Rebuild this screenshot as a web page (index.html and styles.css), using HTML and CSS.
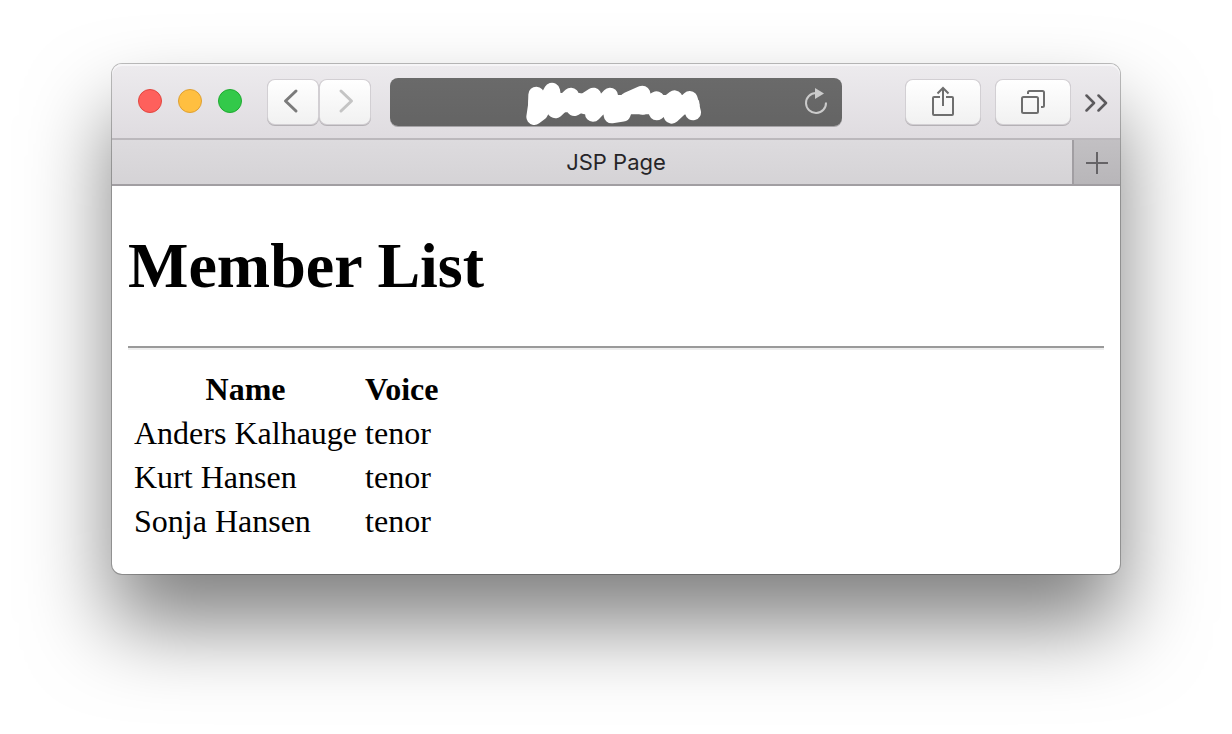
FILE: index.html
```html
<!DOCTYPE html>
<html lang="en">
<head>
<meta charset="utf-8">
<title>JSP Page</title>
<link rel="stylesheet" href="styles.css">
</head>
<body class="desktop">
<div class="window">
  <header class="toolbar">
    <div class="lights">
      <button class="light light-close" aria-label="Close"></button>
      <button class="light light-minimize" aria-label="Minimize"></button>
      <button class="light light-zoom" aria-label="Zoom"></button>
    </div>
    <nav class="history">
      <button class="tool tool-nav" aria-label="Back">
        <svg width="20" height="28" viewBox="0 0 20 28"><path d="M14 3 3.500 13 14 23" fill="none" stroke="#7b7b7b" stroke-width="3" stroke-linecap="round" stroke-linejoin="round"/></svg>
      </button>
      <button class="tool tool-nav" aria-label="Forward">
        <svg width="20" height="28" viewBox="0 0 20 28"><path d="M7 3l10.500 10L7 23" fill="none" stroke="#c4c4c4" stroke-width="3" stroke-linecap="round" stroke-linejoin="round"/></svg>
      </button>
    </nav>
    <div class="address">
      <input class="address-input" type="text" aria-label="Address">
      <svg class="scribble" width="176" height="44" viewBox="20 24 528 132" fill="#fff" stroke="#fff" stroke-linecap="round" stroke-linejoin="round">
        <path stroke-width="48" d="M51 62 50 95 45 129 62 116 98 50 108 109 155 65 165 102 222 65 221 119 272 65 277 124 310 119 325 78 369 59 370 98 412 76 412 115 466 73 457 125 511 75 521 115"/>
        <path stroke-width="58" fill="none" d="M56 86H180L200 92H512"/>
      </svg>
      <button class="reload" aria-label="Reload">
        <svg width="24" height="28" viewBox="0 0 24 28"><path d="M12 5A10 10 0 1 0 22 14.500" fill="none" stroke="#cbcbcb" stroke-width="2"/><path d="M11 0v11l9-5.500z" fill="#cbcbcb"/></svg>
      </button>
    </div>
    <div class="actions">
      <button class="tool tool-wide" aria-label="Share">
        <svg width="24" height="32" viewBox="0 0 24 32" fill="none" stroke="#6e6e6e" stroke-width="2"><path d="M9 11H3a1 1 0 0 0-1 1v16a1 1 0 0 0 1 1h18a1 1 0 0 0 1-1V12a1 1 0 0 0-1-1h-6M12 20V2M6.500 7.500 12 2l5.500 5.500"/></svg>
      </button>
      <button class="tool tool-wide" aria-label="Show all tabs">
        <svg width="26" height="26" viewBox="0 0 26 26" fill="none" stroke="#6e6e6e" stroke-width="2"><rect x="2" y="8" width="16" height="16" rx="1.500"/><path d="M8 5V3.500A1.500 1.500 0 0 1 9.500 2h13A1.500 1.500 0 0 1 24 3.500v13a1.500 1.500 0 0 1-1.500 1.500H21"/></svg>
      </button>
      <button class="more" aria-label="More tools">
        <svg width="24" height="20" viewBox="0 0 24 20" fill="none" stroke="#5c5a5d" stroke-width="2.500" stroke-linecap="round" stroke-linejoin="round"><path d="M2.500 3.500l7.500 7.500-7.500 7.500M14.500 3.500l7.500 7.500-7.500 7.500"/></svg>
      </button>
    </div>
  </header>
  <div class="tabs">
    <button class="tab">JSP Page</button>
    <button class="tab-add" aria-label="New tab">
      <svg width="22" height="22" viewBox="0 0 22 22"><path d="M11 0v22M0 11h22" stroke="#656366" stroke-width="2"/></svg>
    </button>
  </div>
  <main class="page">
    <h1 class="title">Member List</h1>
    <hr class="rule">
    <table class="members">
      <thead>
        <tr><th scope="col">Name</th><th scope="col">Voice</th></tr>
      </thead>
      <tbody>
        <tr><td>Anders Kalhauge</td><td>tenor</td></tr>
        <tr><td>Kurt Hansen</td><td>tenor</td></tr>
        <tr><td>Sonja Hansen</td><td>tenor</td></tr>
      </tbody>
    </table>
  </main>
</div>
</body>
</html>
```
FILE: styles.css
```css
*,
*::before {
  box-sizing: border-box;
}

.desktop {
  margin: 0;
  padding: 64px 112px 160px;
  background: #fff;
}

.window {
  border-radius: 10px;
  background: #fff;
  box-shadow: 0 0 0 1px rgba(0, 0, 0, 0.25), 0 50px 84px rgba(0, 0, 0, 0.5);
}

button {
  display: flex;
  align-items: center;
  justify-content: center;
  margin: 0;
  padding: 0;
  border: 0;
  background: none;
}

.toolbar {
  display: flex;
  align-items: center;
  height: 76px;
  padding: 2px 12px 0 26px;
  border-bottom: 2px solid #bbb8bc;
  border-radius: 10px 10px 0 0;
  background: linear-gradient(#edebee, #dfdce0);
  box-shadow: inset 0 2px 0 #f6f5f7;
}

.lights {
  display: flex;
  gap: 16px;
  margin-right: 26px;
  padding-bottom: 2px;
}

.light {
  width: 24px;
  height: 24px;
  border: 1px solid;
  border-radius: 50%;
}

.light-close {
  border-color: #e2463f;
  background: #fe605c;
}

.light-minimize {
  border-color: #dfa032;
  background: #ffbf40;
}

.light-zoom {
  border-color: #1fab30;
  background: #33c94a;
}

.history {
  display: flex;
  gap: 2px;
  margin-right: 20px;
}

.tool {
  height: 44px;
  border-radius: 7px;
  background: linear-gradient(#fff, #f1f1f1);
  box-shadow: 0 0 0 1px #d2cfd3, 0 1px 0 1px #b4b1b5;
}

.tool-nav {
  width: 50px;
  padding-right: 3px;
}

.address {
  position: relative;
  flex: 1;
  height: 48px;
  margin-right: 64px;
}

.address-input {
  display: block;
  width: 100%;
  height: 100%;
  padding: 0 48px 0 16px;
  border: 0;
  border-radius: 8px;
  background: linear-gradient(#6a6a6a, #646464);
  box-shadow: 0 1px 0 #a5a3a6;
  color: #fff;
  font: 22px Inter, sans-serif;
}

.scribble {
  position: absolute;
  top: 4px;
  left: 0;
  right: 4px;
  margin: 0 auto;
  pointer-events: none;
}

.reload {
  position: absolute;
  top: 0;
  bottom: 0;
  right: 14px;
}

.actions {
  display: flex;
  align-items: center;
  gap: 16px;
}

.tool-wide {
  width: 74px;
}

.more {
  margin-left: -2px;
}

.tabs {
  display: flex;
  height: 46px;
  border-bottom: 2px solid #a19ea2;
  background: linear-gradient(#dddbde, #d5d3d6);
}

.tab {
  flex: 1;
  padding-left: 48px;
  color: #262528;
  font: 22px/28px Inter, sans-serif;
}

.tab-add {
  width: 48px;
  padding-top: 2px;
  border-left: 2px solid #a19ea2;
  background: linear-gradient(#c2c0c3, #b8b6b9);
}

.page {
  display: flow-root;
  padding: 0 16px 29px;
  color: #000;
  font: 32px/36px "Liberation Serif", serif;
}

.title {
  margin: 43px 0;
  font-size: 64px;
  line-height: 74px;
}

.rule {
  height: 4px;
  margin: 0 0 15px;
  border: 0 solid #9a9a9a;
  border-top-width: 2px;
  background: #eee;
}

.members {
  border-spacing: 4px;
}

.members th,
.members td {
  padding: 2px;
}
```
